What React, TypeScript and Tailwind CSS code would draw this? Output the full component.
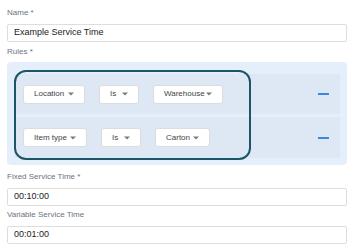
import React from "react";

const rules = [
  { id: 1, cells: [{ label: "Location", w: "w-[62px]" }, { label: "Is", w: "w-[40px]" }, { label: "Warehouse", w: "w-[70px]" }], h: "h-[40px]" },
  { id: 2, cells: [{ label: "Item type", w: "w-[64px]" }, { label: "Is", w: "w-[40px]" }, { label: "Carton", w: "w-[55px]" }], h: "h-[41px]" },
];

function Caret() {
  return (
    <svg width="6" height="4" viewBox="0 0 6 4" className="shrink-0">
      <path d="M0 0.5h6L3 3.5z" fill="#7a7a7a" />
    </svg>
  );
}

function Select({ label, w }: { label: string; w: string }) {
  return (
    <div className={`${w} h-[19px] flex items-center justify-between pl-[10px] pr-[10px] bg-white border border-[#dcdcdc] rounded-[3px] text-[8px] text-[#444] whitespace-nowrap`}>
      <span>{label}</span>
      <Caret />
    </div>
  );
}

function Field({ label, value, mt }: { label: string; value: string; mt: string }) {
  return (
    <>
      <div className={`${mt} text-[8px] leading-[12px] text-[#6b7380]`}>{label}</div>
      <div className="mt-[5px] h-[18px] flex items-center pl-[6px] bg-white border border-[#dedede] rounded-[2px] text-[9px] text-[#222]">
        {value}
      </div>
    </>
  );
}

export default function App() {
  return (
    <div className="w-[348px] h-[244px] bg-white pl-[7px] pr-[1px] pt-[7px] overflow-hidden" style={{ fontFamily: '"Liberation Sans", Arial, sans-serif' }}>
      <Field label="Name *" value="Example Service Time" mt="mt-0" />
      <div className="mt-[4px] text-[8px] leading-[12px] text-[#6b7380]">Rules *</div>

      {/* Rules panel */}
      <div className="relative mt-[4px] bg-[#e5effb] rounded-[4px] pt-[12px] px-[7px] pb-[7px] flex flex-col gap-[3px]">
        {rules.map((r) => (
          <div key={r.id} className={`${r.h} bg-[#dee8f5] rounded-[2px] flex items-center pl-[9px] pr-[11px]`}>
            <div className="flex items-center gap-[14px]">
              {r.cells.map((c, i) => (
                <Select key={i} label={c.label} w={c.w} />
              ))}
            </div>
            <div className="ml-auto w-[11px] h-[2px] bg-[#3b86e0]" />
          </div>
        ))}
        {/* highlight outline */}
        <div className="absolute left-[7px] top-[8px] w-[237px] h-[90px] border-2 border-[#1b5566] rounded-[12px] pointer-events-none" />
      </div>

      <Field label="Fixed Service Time *" value="00:10:00" mt="mt-[6px]" />
      <Field label="Variable Service Time" value="00:01:00" mt="mt-[3px]" />
    </div>
  );
}
